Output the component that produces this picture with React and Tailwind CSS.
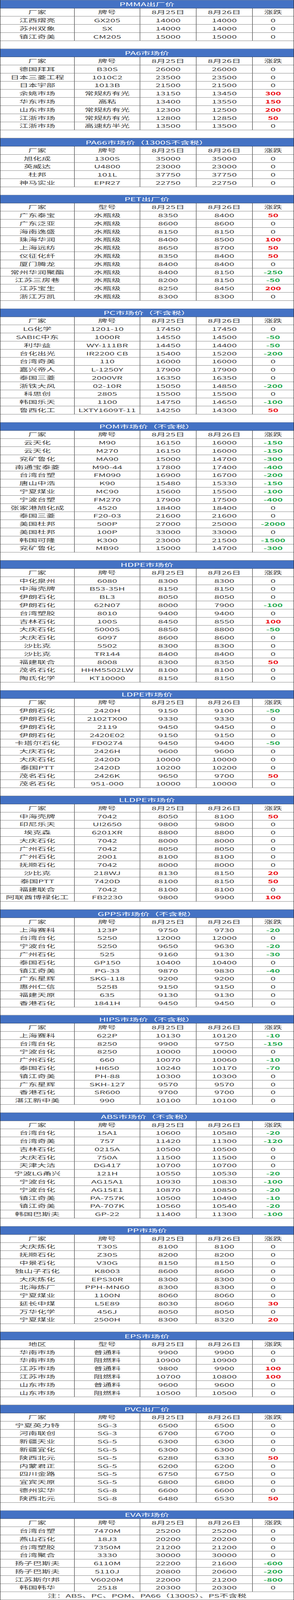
import React from "react";

const STD = ["厂家", "牌号", "8月25日", "8月26日", "涨跌"];
const MODEL = ["厂家", "型号", "8月25日", "8月26日", "涨跌"];
const REGION = ["地区", "型号", "8月25日", "8月26日", "涨跌"];

const tables = [
  {
    title: "PMMA出厂价",
    head: STD,
    rows: [
      ["江西熠亮", "GX205", "14000", "14000", 0],
      ["苏州双象", "SX", "14000", "14000", 0],
      ["镇江奇美", "CM205", "15000", "15000", 0],
    ],
  },
  {
    title: "PA6市场价",
    head: STD,
    rows: [
      ["德国拜耳", "B30S", "26000", "26000", 0],
      ["日本三菱工程", "1010C2", "23500", "23500", 0],
      ["日本宇部", "1013B", "21500", "21500", 0],
      ["余姚市场", "常规纺有光", "13150", "13450", 300],
      ["华东市场", "高粘", "13400", "13550", 150],
      ["山东市场", "常规纺有光", "12300", "12500", 200],
      ["江浙市场", "常规纺有光", "12800", "12850", 50],
      ["江浙市场", "高速纺半光", "13500", "13500", 0],
    ],
  },
  {
    title: "PA66市场价（1300S不含税）",
    head: STD,
    rows: [
      ["旭化成", "1300S", "35000", "35000", 0],
      ["英威达", "U4800", "23000", "23000", 0],
      ["杜邦", "101L", "37750", "37750", 0],
      ["神马实业", "EPR27", "22750", "22750", 0],
    ],
  },
  {
    title: "PET出厂价",
    head: MODEL,
    rows: [
      ["广东泰宝", "水瓶级", "8350", "8400", 50],
      ["广东泛亚", "水瓶级", "8600", "8600", 0],
      ["海南逸盛", "水瓶级", "8150", "8150", 0],
      ["珠海华润", "水瓶级", "8400", "8500", 100],
      ["上海远纺", "水瓶级", "8650", "8700", 50],
      ["仪征化纤", "水瓶级", "8350", "8400", 50],
      ["厦门腾龙", "水瓶级", "8400", "8400", 0],
      ["常州华润聚酯", "水瓶级", "8400", "8150", -250],
      ["江苏三房巷", "水瓶级", "8200", "8150", -50],
      ["江苏宝生", "水瓶级", "8250", "8450", 200],
      ["浙江万凯", "水瓶级", "8300", "8300", 0],
    ],
  },
  {
    title: "PC市场价（不含税）",
    head: STD,
    rows: [
      ["LG化学", "1201-10", "17450", "17450", 0],
      ["SABIC中东", "1000R", "14550", "14500", -50],
      ["利华益", "WY-111BR", "14450", "14400", -50],
      ["台化出光", "IR2200 CB", "15400", "15200", -200],
      ["台湾奇美", "110", "16000", "16000", 0],
      ["嘉兴帝人", "L-1250Y", "17900", "17900", 0],
      ["泰国三菱", "2000VR", "16350", "16350", 0],
      ["浙铁大风", "02-10R", "15050", "14850", -200],
      ["科思创", "2805", "15500", "15500", 0],
      ["韩国乐天", "1100", "14750", "14650", -100],
      ["鲁西化工", "LXTY1609T-11", "14250", "14300", 50],
    ],
  },
  {
    title: "POM市场价（不含税）",
    head: STD,
    rows: [
      ["云天化", "M90", "16150", "16000", -150],
      ["云天化", "M270", "16150", "16000", -150],
      ["兖矿鲁化", "MA90", "15000", "14700", -300],
      ["南通宝泰菱", "M90-44", "17800", "17400", -400],
      ["台湾台塑", "FM090", "16900", "16700", -200],
      ["唐山中浩", "K90", "15480", "15330", -150],
      ["宁夏煤业", "MC90", "15600", "15500", -100],
      ["宁波台塑", "FM270", "17900", "17500", -400],
      ["张家港旭化成", "4520", "18400", "18400", 0],
      ["泰国三菱", "F20-03", "21600", "21600", 0],
      ["美国杜邦", "500P", "27000", "25000", -2000],
      ["美国杜邦", "100P", "33000", "33000", 0],
      ["韩国可隆", "K300", "23000", "21500", -1500],
      ["兖矿鲁化", "MB90", "15000", "14700", -300],
    ],
  },
  {
    title: "HDPE市场价",
    head: STD,
    rows: [
      ["中化泉州", "6080", "8300", "8300", 0],
      ["中海壳牌", "B53-35H", "8150", "8150", 0],
      ["伊朗石化", "BL3", "8050", "8050", 0],
      ["伊朗石化", "62N07", "8000", "7900", -100],
      ["台湾塑胶", "8010", "9400", "9400", 0],
      ["吉林石化", "100S", "8450", "8550", 100],
      ["大庆石化", "5000S", "8850", "8800", -50],
      ["大庆石化", "6097", "8600", "8600", 0],
      ["沙比克", "5502", "8300", "8300", 0],
      ["沙比克", "TR144", "8400", "8400", 0],
      ["福建联合", "8008", "8300", "8350", 50],
      ["茂名石化", "HHM5502LW", "8100", "8100", 0],
      ["陶氏化学", "KT10000", "8150", "8150", 0],
    ],
  },
  {
    title: "LDPE市场价",
    head: STD,
    rows: [
      ["伊朗石化", "2420H", "9150", "9100", -50],
      ["伊朗石化", "2102TX00", "9330", "9330", 0],
      ["伊朗石化", "2119", "9450", "9450", 0],
      ["伊朗石化", "2420E02", "9150", "9150", 0],
      ["卡塔尔石化", "FD0274", "9450", "9400", -50],
      ["大庆石化", "2426H", "9600", "9600", 0],
      ["大庆石化", "2420D", "10000", "10000", 0],
      ["泰国PTT", "2420D", "10200", "10200", 0],
      ["茂名石化", "2426K", "9650", "9700", 50],
      ["茂名石化", "951-000", "10000", "10000", 0],
    ],
  },
  {
    title: "LLDPE市场价",
    head: STD,
    rows: [
      ["中海壳牌", "7042", "8050", "8100", 50],
      ["印尼乐天", "UI2650", "9800", "9800", 0],
      ["埃克森", "6201XR", "8800", "8800", 0],
      ["大庆石化", "7042", "8000", "8000", 0],
      ["广州石化", "7042", "8050", "8050", 0],
      ["广州石化", "2001", "8100", "8100", 0],
      ["抚顺石化", "7042", "8000", "8000", 0],
      ["沙比克", "218WJ", "8130", "8150", 20],
      ["泰国PTT", "7420D", "8100", "8150", 50],
      ["福建联合", "7042", "8100", "8100", 0],
      ["阿联酋博禄化工", "FB2230", "9800", "9900", 100],
    ],
  },
  {
    title: "GPPS市场价（不含税）",
    head: STD,
    rows: [
      ["上海赛科", "123P", "9750", "9730", -20],
      ["台湾台化", "5250", "12000", "12000", 0],
      ["宁波台化", "5250", "9650", "9630", -20],
      ["广州石化", "525", "9160", "9130", -30],
      ["泰国石化", "GP150", "10400", "10400", 0],
      ["镇江奇美", "PG-33", "9870", "9830", -40],
      ["广东星辉", "SKG-118", "9200", "9200", 0],
      ["惠州仁信", "525B", "9150", "9150", 0],
      ["福建天原", "635", "9130", "9130", 0],
      ["香港石化", "1841H", "9450", "9450", 0],
    ],
  },
  {
    title: "HIPS市场价（不含税）",
    head: STD,
    rows: [
      ["上海赛科", "622P", "10130", "10120", -10],
      ["台湾台化", "8250", "9900", "9750", -150],
      ["宁波台化", "8250", "10000", "10000", 0],
      ["广州石化", "660", "10070", "10060", -10],
      ["泰国石化", "HI650", "10240", "10170", -70],
      ["镇江奇美", "PH-88", "10300", "10300", 0],
      ["广东星辉", "SKH-127", "9570", "9570", 0],
      ["香港石化", "SR600", "9700", "9700", 0],
      ["湛江新中美", "990", "10100", "10100", 0],
    ],
  },
  {
    title: "ABS市场价（不含税）",
    head: STD,
    rows: [
      ["台湾台化", "15A1", "10600", "10580", -20],
      ["台湾奇美", "757", "11420", "11300", -120],
      ["吉林石化", "0215A", "10500", "10500", 0],
      ["大庆石化", "750A", "11500", "11500", 0],
      ["天津大沽", "DG417", "10700", "10700", 0],
      ["宁波LG甬兴", "121H", "10550", "10530", -20],
      ["宁波台化", "AG15A1", "10930", "10830", -100],
      ["宁波台化", "AG15E1", "10870", "10850", -20],
      ["镇江奇美", "PA-757K", "10500", "10490", -10],
      ["镇江奇美", "PA-707K", "10560", "10540", -20],
      ["韩国巴斯夫", "GP-22", "11400", "11300", -100],
    ],
  },
  {
    title: "PP市场价",
    head: STD,
    rows: [
      ["大庆炼化", "T30S", "8100", "8100", 0],
      ["抚顺石化", "Z30S", "8200", "8200", 0],
      ["中景石化", "V30G", "8150", "8150", 0],
      ["独山子石化", "K8003", "8600", "8600", 0],
      ["大庆炼化", "EPS30R", "8300", "8300", 0],
      ["北海炼厂", "PPH-MN60", "8300", "8300", 0],
      ["宁夏煤业", "1100N", "8060", "8060", 0],
      ["延长中煤", "L5E89", "8030", "8060", 30],
      ["万华化学", "456J", "8050", "8050", 0],
      ["宁夏煤业", "2500H", "8300", "8320", 20],
    ],
  },
  {
    title: "EPS市场价",
    head: REGION,
    rows: [
      ["华南市场", "普通料", "9900", "9900", 0],
      ["华南市场", "阻燃料", "10900", "10900", 0],
      ["江苏市场", "普通料", "9800", "9900", 100],
      ["江苏市场", "阻燃料", "10700", "10800", 100],
      ["山东市场", "普通料", "9600", "9600", 0],
      ["山东市场", "阻燃料", "10500", "10500", 0],
    ],
  },
  {
    title: "PVC出厂价",
    head: STD,
    rows: [
      ["宁夏英力特", "SG-3", "6500", "6500", 0],
      ["河南联创", "SG-3", "6700", "6700", 0],
      ["新疆天业", "SG-5", "6300", "6300", 0],
      ["新疆宜化", "SG-5", "6300", "6300", 0],
      ["陕西北元", "SG-5", "6280", "6330", 50],
      ["内蒙君正", "SG-5", "6200", "6200", 0],
      ["四川金路", "SG-5", "6750", "6750", 0],
      ["宜宾天原", "SG-5", "6800", "6800", 0],
      ["德州实华", "SG-8", "6600", "6600", 0],
      ["陕西北元", "SG-8", "6480", "6530", 50],
    ],
  },
  {
    title: "EVA市场价",
    head: STD,
    rows: [
      ["台湾台塑", "7470M", "25200", "25200", 0],
      ["燕山石化", "18J3", "20200", "20200", 0],
      ["台湾塑胶", "7350M", "21200", "21200", 0],
      ["台湾聚合", "3330", "30000", "30000", 0],
      ["扬子巴斯夫", "6110M", "22200", "21600", -600],
      ["扬子巴斯夫", "5110J", "20800", "20600", -200],
      ["江苏斯尔邦", "V6020M", "22000", "21200", -800],
      ["韩国韩华", "2518", "20300", "20300", 0],
    ],
  },
];

const rowCls =
  "grid grid-cols-[190px_168px_144px_144px_105px] h-10 border-b border-[#1c1c1c]";
const cellCls =
  "flex items-center justify-center whitespace-nowrap border-r border-[#1c1c1c]";
const lastCls = "flex items-center justify-center whitespace-nowrap";

function Change({ v }) {
  if (v > 0) return <span className="font-bold text-[#ec0b12]">{v}</span>;
  if (v < 0) return <span className="font-bold text-[#1faa4e]">{"-" + Math.abs(v)}</span>;
  return <span>0</span>;
}

function Table({ t }) {
  return (
    <>
      <div className="flex h-10 items-center justify-center border-b border-[#1c1c1c] bg-[#4472c4] text-[24px] text-white">
        {t.title}
      </div>
      <div className={rowCls}>
        {t.head.map((h, i) => (
          <div key={i} className={i === 4 ? lastCls : cellCls}>
            {h}
          </div>
        ))}
      </div>
      {t.rows.map((r, ri) => (
        <div key={ri} className={rowCls}>
          <div className={cellCls}>{r[0]}</div>
          <div className={cellCls}>{r[1]}</div>
          <div className={cellCls}>{r[2]}</div>
          <div className={cellCls}>{r[3]}</div>
          <div className={lastCls}>
            <Change v={r[4]} />
          </div>
        </div>
      ))}
    </>
  );
}

export default function App() {
  // The capture window is 4096px tall, so the 7881px sheet is fitted vertically into it.
  return (
    <div className="h-[4096px] w-[753px] overflow-hidden bg-white">
      <div className="w-[753px] origin-top [transform:scaleY(0.519731)] font-['Noto_Sans_CJK_SC','Noto_Sans',sans-serif] text-[23px] leading-none text-[#404040]">
        <div className="border-x border-t border-[#1c1c1c]">
          {tables.map((t, i) => (
            <React.Fragment key={i}>
              {i > 0 && <div className="h-10 border-b border-[#1c1c1c]" />}
              <Table t={t} />
            </React.Fragment>
          ))}
          <div className="flex h-10 items-center justify-center border-b border-[#1c1c1c]">
            注：ABS、PC、POM、PA66（1300S）、PS不含税
          </div>
        </div>
      </div>
    </div>
  );
}
